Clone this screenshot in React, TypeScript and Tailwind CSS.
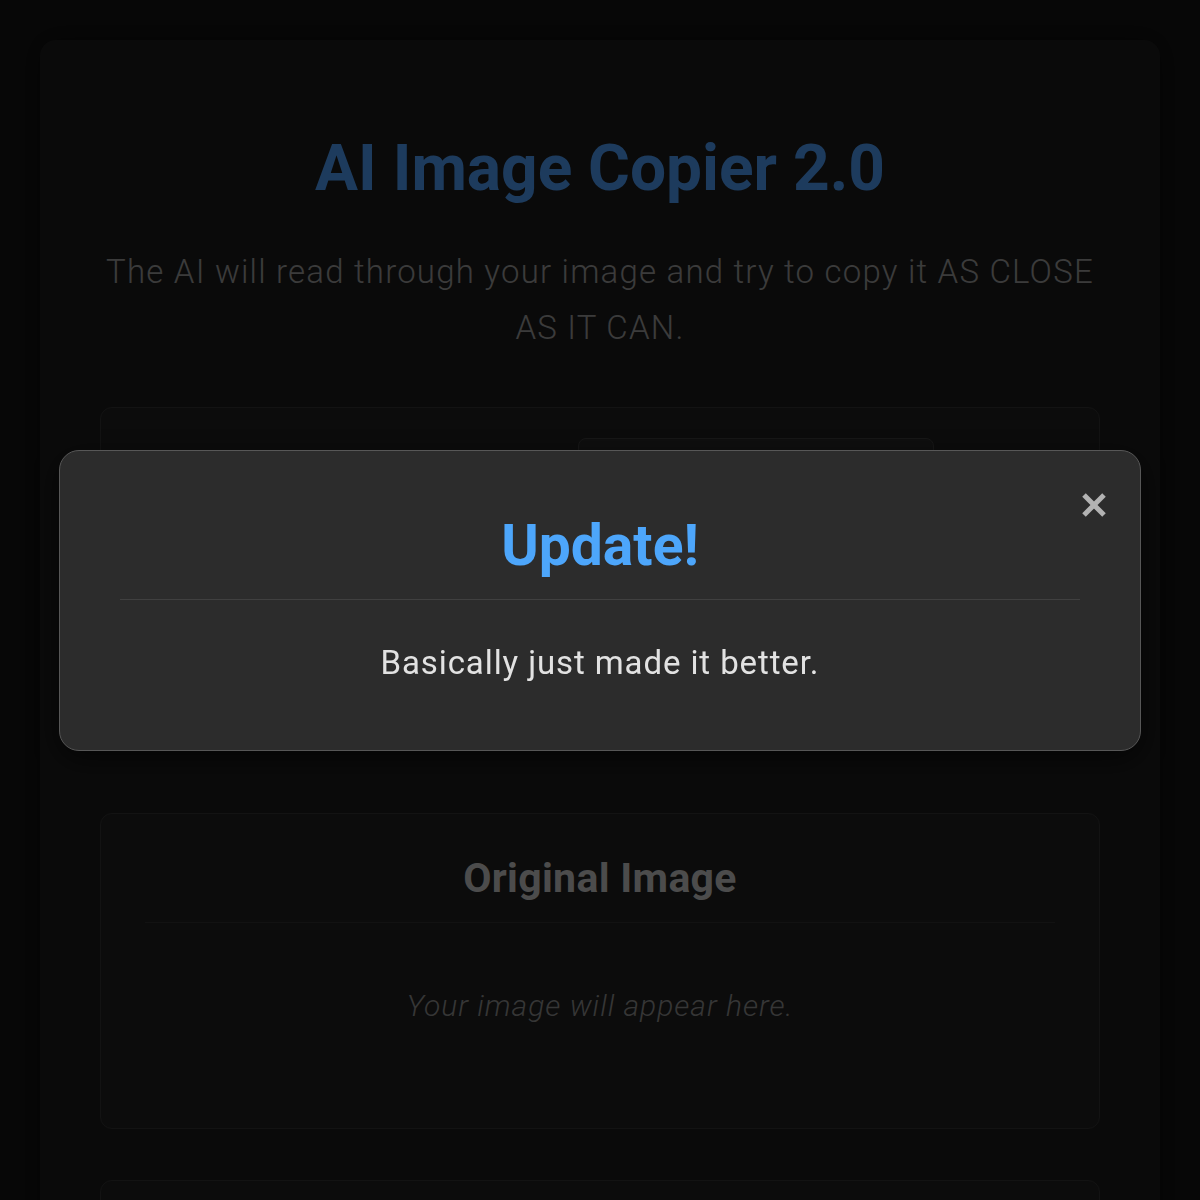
import { useState } from "react";

function CloseIcon() {
  return (
    <svg width="26" height="26" viewBox="0 0 26 26" fill="none">
      <path d="M3 3L23 23M23 3L3 23" stroke="currentColor" strokeWidth="5" />
    </svg>
  );
}

function UpdateModal({ onClose }: { onClose: () => void }) {
  return (
    <div className="fixed inset-0 z-50 flex items-center justify-center bg-black/60">
      <div className="relative w-[1082px] rounded-[20px] border-[1.5px] border-[#575757] bg-[#2c2c2c] px-[60px] pt-[61px] pb-[63px] shadow-[0_8px_30px_rgba(0,0,0,0.6)]">
        <button
          onClick={onClose}
          className="absolute top-[41px] right-[33px] text-[#b3b3b3]"
        >
          <CloseIcon />
        </button>
        <h2 className="border-b border-[#404040] pb-[20px] text-center text-[57px] font-bold leading-[67px] text-[#4da6fb]">
          Update!
        </h2>
        <p className="mt-[39px] text-center text-[33px] leading-[48px] tracking-[0.9px] text-[#e2e2e2]">
          Basically just made it better.
        </p>
      </div>
    </div>
  );
}

export default function App() {
  const [showUpdate, setShowUpdate] = useState(true);

  return (
    <div className="min-h-screen bg-[#131313] px-[40px] pt-[40px] font-['Roboto',sans-serif]">
      <main className="min-h-[1200px] rounded-2xl bg-[#1b1b1b] px-[60px] pt-[90px] shadow-[0_0_24px_rgba(0,0,0,0.5)]">
        {/* ---------- HEADING ---------- */}
        <h1 className="text-center text-[64px] font-bold leading-[77px] text-[#4a94e8]">
          AI Image Copier 2.0
        </h1>
        <p className="mt-[37px] text-center text-[33px] font-light leading-[56px] tracking-[1.2px] text-[#959595]">
          The AI will read through your image and try to copy it AS CLOSE AS IT
          CAN.
        </p>

        {/* ---------- UPLOAD ---------- */}
        <section className="mt-[51px] h-[338px] rounded-xl border border-[#303030] bg-[#1e1e1e] p-[30px]">
          <div className="flex items-center justify-end gap-4 pr-[135px]">
            <div className="h-[52px] w-[356px] rounded-lg border border-[#3a3a3a] bg-[#252525]" />
          </div>
          <div className="mt-6 h-[160px] rounded-lg border border-dashed border-[#3a3a3a]" />
        </section>

        {/* ---------- ORIGINAL IMAGE ---------- */}
        <section className="mt-[68px] h-[316px] rounded-xl border border-[#303030] bg-[#1e1e1e] px-[44px] pt-[40px]">
          <h3 className="border-b border-[#2e2e2e] pb-[20px] text-center text-[41px] font-bold leading-[48px] tracking-[0.3px] text-[#bdbdbd]">
            Original Image
          </h3>
          <p className="mt-[65px] text-center text-[30px] font-light italic leading-[36px] tracking-[1px] text-[#878787]">
            Your image will appear here.
          </p>
        </section>

        {/* ---------- COPIED IMAGE ---------- */}
        <section className="mt-[51px] h-[316px] rounded-xl border border-[#303030] bg-[#1e1e1e]" />
      </main>

      {showUpdate && <UpdateModal onClose={() => setShowUpdate(false)} />}
    </div>
  );
}
